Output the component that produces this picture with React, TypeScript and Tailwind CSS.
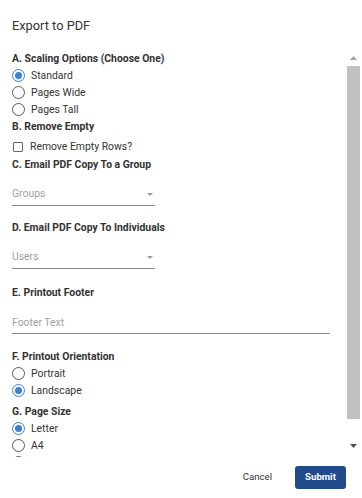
import React from "react";

function Radio({ label, checked }: { label: string; checked?: boolean }) {
  return (
    <div className="h-[17px] shrink-0 flex items-center">
      <span
        className={
          checked
            ? "w-[13px] h-[13px] rounded-full border border-[#3f7fd0] flex items-center justify-center shrink-0"
            : "w-[13px] h-[13px] rounded-full border border-[#5a5a5a] flex items-center justify-center shrink-0"
        }
      >
        {checked ? <span className="w-[7px] h-[7px] rounded-full bg-[#3f7fd0]" /> : null}
      </span>
      {label ? (
        <span className="ml-[6px] text-[10.4px] leading-[14px] text-[#333]">{label}</span>
      ) : null}
    </div>
  );
}

function Label({ children, cls }: { children: React.ReactNode; cls: string }) {
  return (
    <div className={"flex items-center shrink-0 text-[10.4px] font-bold text-[#333] " + cls}>
      {children}
    </div>
  );
}

function Select({ placeholder, cls }: { placeholder: string; cls: string }) {
  return (
    <div
      className={
        "w-[143px] shrink-0 flex items-center justify-between border-b border-[#8a8a8a] pb-[4px] leading-[14px] " +
        cls
      }
    >
      <span className="text-[10.4px] text-[#a0a0a0]">{placeholder}</span>
      <svg width="6" height="3" viewBox="0 0 6 3" className="mr-[2px]">
        <polygon points="0,0 6,0 3,3" fill="#9a9a9a" />
      </svg>
    </div>
  );
}

export default function App() {
  return (
    <div
      className="w-[362px] h-[498px] bg-white flex flex-col overflow-hidden"
      style={{ fontFamily: "Roboto, 'Liberation Sans', sans-serif" }}
    >
      <div className="h-[50px] shrink-0 pl-3 pt-[18px]">
        <div className="text-[12.8px] leading-[15px] text-[#333]">Export to PDF</div>
      </div>

      <div className="h-[407px] shrink-0 flex">
        <div className="flex-1 overflow-hidden pl-3 flex flex-col">
          <Label cls="h-[17px]">A. Scaling Options (Choose One)</Label>
          <Radio label="Standard" checked />
          <Radio label="Pages Wide" />
          <Radio label="Pages Tall" />
          <Label cls="h-[18px]">B. Remove Empty</Label>
          <div className="h-[21px] shrink-0 flex items-center">
            <span className="w-[10px] h-[10px] ml-[1px] mr-[7px] border border-[#666] rounded-[1px] shrink-0" />
            <span className="text-[10.4px] text-[#333]">Remove Empty Rows?</span>
          </div>
          <Label cls="h-[16px]">C. Email PDF Copy To a Group</Label>
          <Select placeholder="Groups" cls="mt-[14px]" />
          <Label cls="h-[16px] mt-[14px]">D. Email PDF Copy To Individuals</Label>
          <Select placeholder="Users" cls="mt-[14px]" />
          <Label cls="h-[16px] mt-[16px]">E. Printout Footer</Label>
          <div className="mt-[13px] w-[318px] border-b border-[#8a8a8a] pb-[3px] leading-[14px] shrink-0">
            <span className="text-[10.4px] text-[#a0a0a0]">Footer Text</span>
          </div>
          <Label cls="h-[16px] mt-[15px]">F. Printout Orientation</Label>
          <Radio label="Portrait" />
          <Radio label="Landscape" checked />
          <Label cls="h-[17px] mt-[4px]">G. Page Size</Label>
          <Radio label="Letter" checked />
          <Radio label="A4" />
          <Radio label="" />
        </div>

        <div className="w-[13px] mr-[2px] shrink-0 flex flex-col pb-[4px]">
          <div className="h-[15px] flex items-center justify-center">
            <svg width="7" height="4" viewBox="0 0 7 4">
              <polygon points="0,4 7,4 3.5,0" fill="#a3a3a3" />
            </svg>
          </div>
          <div className="mt-[1px] h-[353px] bg-[#c1c1c1]" />
          <div className="flex-1" />
          <div className="h-[15px] flex items-center justify-center">
            <svg width="7" height="4" viewBox="0 0 7 4">
              <polygon points="0,0 7,0 3.5,4" fill="#505050" />
            </svg>
          </div>
        </div>
      </div>

      <div className="flex-1 flex items-start justify-end pt-[9px] pr-[16px]">
        <button className="h-[23px] mr-[23px] text-[9.6px] text-[#333] bg-transparent">Cancel</button>
        <button className="h-[23px] w-[51px] rounded-[3px] bg-[#1f4b8b] text-white text-[9.6px] font-bold">
          Submit
        </button>
      </div>
    </div>
  );
}
